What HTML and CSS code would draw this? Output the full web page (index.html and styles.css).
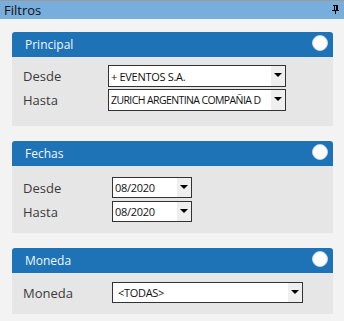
FILE: index.html
```html
<!DOCTYPE html>
<html lang="es">
<head>
    <meta charset="UTF-8">
    <title>Filtros</title>
    <link rel="stylesheet" href="styles.css">
</head>
<body>

<div class="titlebar">
    <span>Filtros</span>
    <svg class="pin" width="7" height="9" viewBox="0 0 7 9">
        <rect x="1" y="0" width="5" height="1" fill="#000"/>
        <rect x="2" y="1" width="1" height="4" fill="#000"/>
        <rect x="4" y="1" width="2" height="4" fill="#000"/>
        <rect x="0" y="5" width="7" height="1" fill="#000"/>
        <rect x="3" y="6" width="1" height="3" fill="#000"/>
    </svg>
</div>

<div class="content">
    <!-- Principal -->
    <div class="panel">
        <div class="panel-head">
            <span>Principal</span>
            <span class="circle"></span>
        </div>
        <div class="panel-body principal">
            <div class="row">
                <label>Desde</label>
                <div class="select wide"><span>+ EVENTOS S.A.</span><i class="arrow"></i></div>
            </div>
            <div class="row">
                <label>Hasta</label>
                <div class="select wide"><span class="tight">ZURICH ARGENTINA COMPAÑIA D</span><i class="arrow"></i></div>
            </div>
        </div>
    </div>

    <!-- Fechas -->
    <div class="panel">
        <div class="panel-head">
            <span>Fechas</span>
            <span class="circle"></span>
        </div>
        <div class="panel-body fechas">
            <div class="row">
                <label>Desde</label>
                <div class="select short"><span>08/2020</span><i class="arrow"></i></div>
            </div>
            <div class="row">
                <label>Hasta</label>
                <div class="select short"><span>08/2020</span><i class="arrow"></i></div>
            </div>
        </div>
    </div>

    <!-- Moneda -->
    <div class="panel">
        <div class="panel-head">
            <span>Moneda</span>
            <span class="circle"></span>
        </div>
        <div class="panel-body moneda">
            <div class="row">
                <label>Moneda</label>
                <div class="select medium"><span class="pad">&lt;TODAS&gt;</span><i class="arrow"></i></div>
            </div>
        </div>
    </div>
</div>

</body>
</html>
```

FILE: styles.css
```css
body {
    margin: 0;
    background: #f3f3f3;
    font-family: 'Open Sans', sans-serif;
    color: #333;
}
.titlebar {
    border-top: 1px solid #9a9a9a;
    height: 18px;
    background: #78aedb;
    padding: 0 5px 0 4px;
    display: flex;
    justify-content: space-between;
    align-items: center;
    font-size: 13px;
    color: #111;
}
.pin {
    margin-top: -1px;
}
.content {
    padding: 13px 11px 0 12px;
}
.panel {
    margin-bottom: 15px;
}
.panel-head {
    height: 25px;
    background: #1e73b7;
    border-radius: 3px 3px 0 0;
    padding: 0 5px 0 13px;
    display: flex;
    justify-content: space-between;
    align-items: center;
    color: #f2f6fa;
    font-size: 12px;
}
.circle {
    width: 14px;
    height: 14px;
    border-radius: 50%;
    background: #fff;
    border: 1px solid #c6d6e6;
    margin-top: -3px;
}
.panel-body {
    background: #e6e6e6;
    padding: 0 11px;
}
.principal {
    padding-top: 8px;
    padding-bottom: 15px;
}
.fechas {
    padding-top: 11px;
    padding-bottom: 11px;
}
.moneda {
    padding-top: 9px;
    padding-bottom: 11px;
}
.row {
    display: flex;
    align-items: center;
    margin-bottom: 3px;
}
.row:last-child {
    margin-bottom: 0;
}
.row label {
    width: 89px;
    font-size: 13px;
    color: #3a3a3a;
}
.principal .row {
    margin-bottom: 2px;
}
.principal .row:last-child {
    margin-bottom: 0;
}
.principal .row label {
    width: 85px;
}
.select {
    box-sizing: border-box;
    height: 21px;
    border: 1px solid #333;
    background: #fff;
    display: flex;
    align-items: center;
    font-size: 11px;
    color: #111;
    overflow: hidden;
}
.principal .select {
    height: 22px;
}
.select span {
    flex: 1;
    white-space: nowrap;
    overflow: hidden;
    padding-left: 2px;
    letter-spacing: -0.3px;
}
.select span.tight {
    font-size: 10.5px;
    letter-spacing: -0.6px;
}
.select span.pad {
    padding-left: 5px;
}
.wide {
    width: 178px;
}
.short {
    width: 80px;
}
.medium {
    width: 191px;
}
.arrow {
    width: 14px;
    align-self: stretch;
    background: #efefef;
    position: relative;
    flex: none;
}
.arrow::after {
    content: '';
    position: absolute;
    left: 3px;
    top: 7px;
    border-left: 4px solid transparent;
    border-right: 4px solid transparent;
    border-top: 4px solid #000;
}
```
